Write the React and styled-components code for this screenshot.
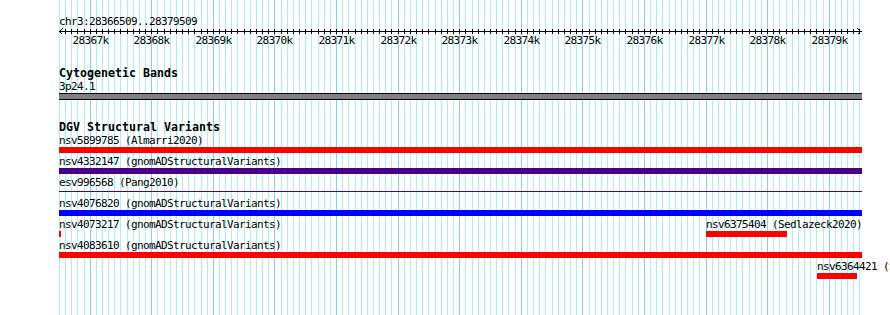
import React from "react";
import styled, { createGlobalStyle } from "styled-components";

const GlobalStyle = createGlobalStyle`
  html, body {
    margin: 0;
    padding: 0;
    background: #ffffff;
    overflow: hidden;
  }
  body {
    font-family: "DejaVu Sans Mono", "Liberation Mono", monospace;
    color: #000000;
  }
`;

const START_BP = 28366500;
const END_BP = 28379500;
const ORIGIN = 59;
const toX = (bp) => 90.2 + (bp - 28367000) * 0.061583;

const Canvas = styled.div`
  position: relative;
  width: 890px;
  height: 315px;
  overflow: hidden;
  background: #ffffff;
`;

const GridBackdrop = styled.svg`
  position: absolute;
  top: 0;
  left: 0;
  z-index: 0;
  display: block;
`;

const Content = styled.div`
  position: relative;
  z-index: 1;
  width: 803px;
  padding-left: ${ORIGIN}px;
`;

const RulerSection = styled.section`
  padding-top: 15px;
`;

const SmallText = styled.div`
  height: 13px;
  font-size: 11px;
  letter-spacing: -0.62px;
  line-height: 13px;
  white-space: nowrap;
`;

const RulerSvg = styled.svg`
  display: block;
  overflow: visible;
`;

const TrackSection = styled.section`
  margin-top: ${(p) => p.$gap}px;
`;

const TrackTitle = styled.h2`
  margin: 0;
  height: 13px;
  font-size: 11.63px;
  line-height: 13px;
  font-weight: bold;
  white-space: nowrap;
`;

const BandBar = styled.div`
  box-sizing: border-box;
  height: 7px;
  border-top: 1px solid #000000;
  border-bottom: 1px solid #000000;
  background: #808080;
`;

const FeatureRow = styled.div`
  position: relative;
  height: 21px;
`;

const Feature = styled.div`
  position: absolute;
  top: 0;
  display: flex;
  flex-direction: column;
`;

const FeatureLabel = styled.div`
  height: 13px;
  font-size: 11px;
  letter-spacing: -0.62px;
  line-height: 13px;
  white-space: nowrap;
`;

const FeatureBar = styled.div`
  height: ${(p) => (p.$thin ? 1 : 6)}px;
  margin-top: ${(p) => (p.$thin ? 2 : 0)}px;
  background: ${(p) => p.$color};
`;

function Grid() {
  const minor = [];
  const major = [];
  for (let bp = START_BP; bp <= END_BP; bp += 100) {
    const x = Math.floor(toX(bp)) + 0.5;
    const line = (
      <line
        key={bp}
        x1={x}
        x2={x}
        y1={0}
        y2={315}
        stroke={bp % 1000 === 0 ? "#87cefa" : "#afeeee"}
        strokeWidth={1}
      />
    );
    if (bp % 1000 === 0) major.push(line);
    else minor.push(line);
  }
  return (
    <GridBackdrop width={890} height={315} shapeRendering="crispEdges">
      {minor}
      {major}
    </GridBackdrop>
  );
}

function Ruler() {
  const ticks = [];
  const labels = [];
  for (let bp = 28366600; bp <= END_BP; bp += 100) {
    const x = Math.floor(toX(bp)) - ORIGIN + 0.5;
    ticks.push(<line key={bp} x1={x} x2={x} y1={1} y2={6} stroke="#000" />);
    if (bp % 1000 === 0) {
      labels.push(
        <text
          key={"l" + bp}
          x={x - 18}
          y={16}
          fontFamily='"DejaVu Sans Mono", "Liberation Mono", monospace'
          fontSize="11"
          letterSpacing="-0.62"
          fill="#000"
        >
          {bp / 1000}k
        </text>
      );
    }
  }
  return (
    <RulerSvg width={803} height={20}>
      <g shapeRendering="crispEdges">
        <line x1={0} x2={803} y1={3.5} y2={3.5} stroke="#000" />
        {ticks}
      </g>
      <path d="M3.5 0.5 L0.5 3.5 L3.5 6.5" fill="none" stroke="#000" shapeRendering="crispEdges" />
      <path d="M798.5 0.5 L801.5 3.5 L798.5 6.5" fill="none" stroke="#000" shapeRendering="crispEdges" />
      {labels}
    </RulerSvg>
  );
}

const FULL = { x: 59, w: 803 };

const rows = [
  [{ ...FULL, label: "nsv5899785 (Almarri2020)", color: "#ff0000" }],
  [{ ...FULL, label: "nsv4332147 (gnomADStructuralVariants)", color: "#4b0082" }],
  [{ ...FULL, label: "esv996568 (Pang2010)", color: "#4b0082", thin: true }],
  [{ ...FULL, label: "nsv4076820 (gnomADStructuralVariants)", color: "#0000ff" }],
  [
    { x: 59, w: 2, label: "nsv4073217 (gnomADStructuralVariants)", color: "#ff0000" },
    { x: 706, w: 81, label: "nsv6375404 (Sedlazeck2020)", color: "#ff0000" },
  ],
  [{ ...FULL, label: "nsv4083610 (gnomADStructuralVariants)", color: "#ff0000" }],
  [{ x: 817, w: 40, label: "nsv6364421 (Sedlazeck2020)", color: "#ff0000" }],
];

export default function App() {
  return (
    <Canvas>
      <GlobalStyle />
      <Grid />
      <Content>
        <RulerSection>
          <SmallText>chr3:28366509..28379509</SmallText>
          <Ruler />
        </RulerSection>

        <TrackSection $gap={19}>
          <TrackTitle>Cytogenetic Bands</TrackTitle>
          <SmallText>3p24.1</SmallText>
          <BandBar />
        </TrackSection>

        <TrackSection $gap={21}>
          <TrackTitle>DGV Structural Variants</TrackTitle>
          {rows.map((row, i) => (
            <FeatureRow key={i}>
              {row.map((f) => (
                <Feature key={f.label} style={{ left: f.x - ORIGIN, width: f.w }}>
                  <FeatureLabel>{f.label}</FeatureLabel>
                  <FeatureBar $color={f.color} $thin={f.thin} />
                </Feature>
              ))}
            </FeatureRow>
          ))}
        </TrackSection>
      </Content>
    </Canvas>
  );
}
